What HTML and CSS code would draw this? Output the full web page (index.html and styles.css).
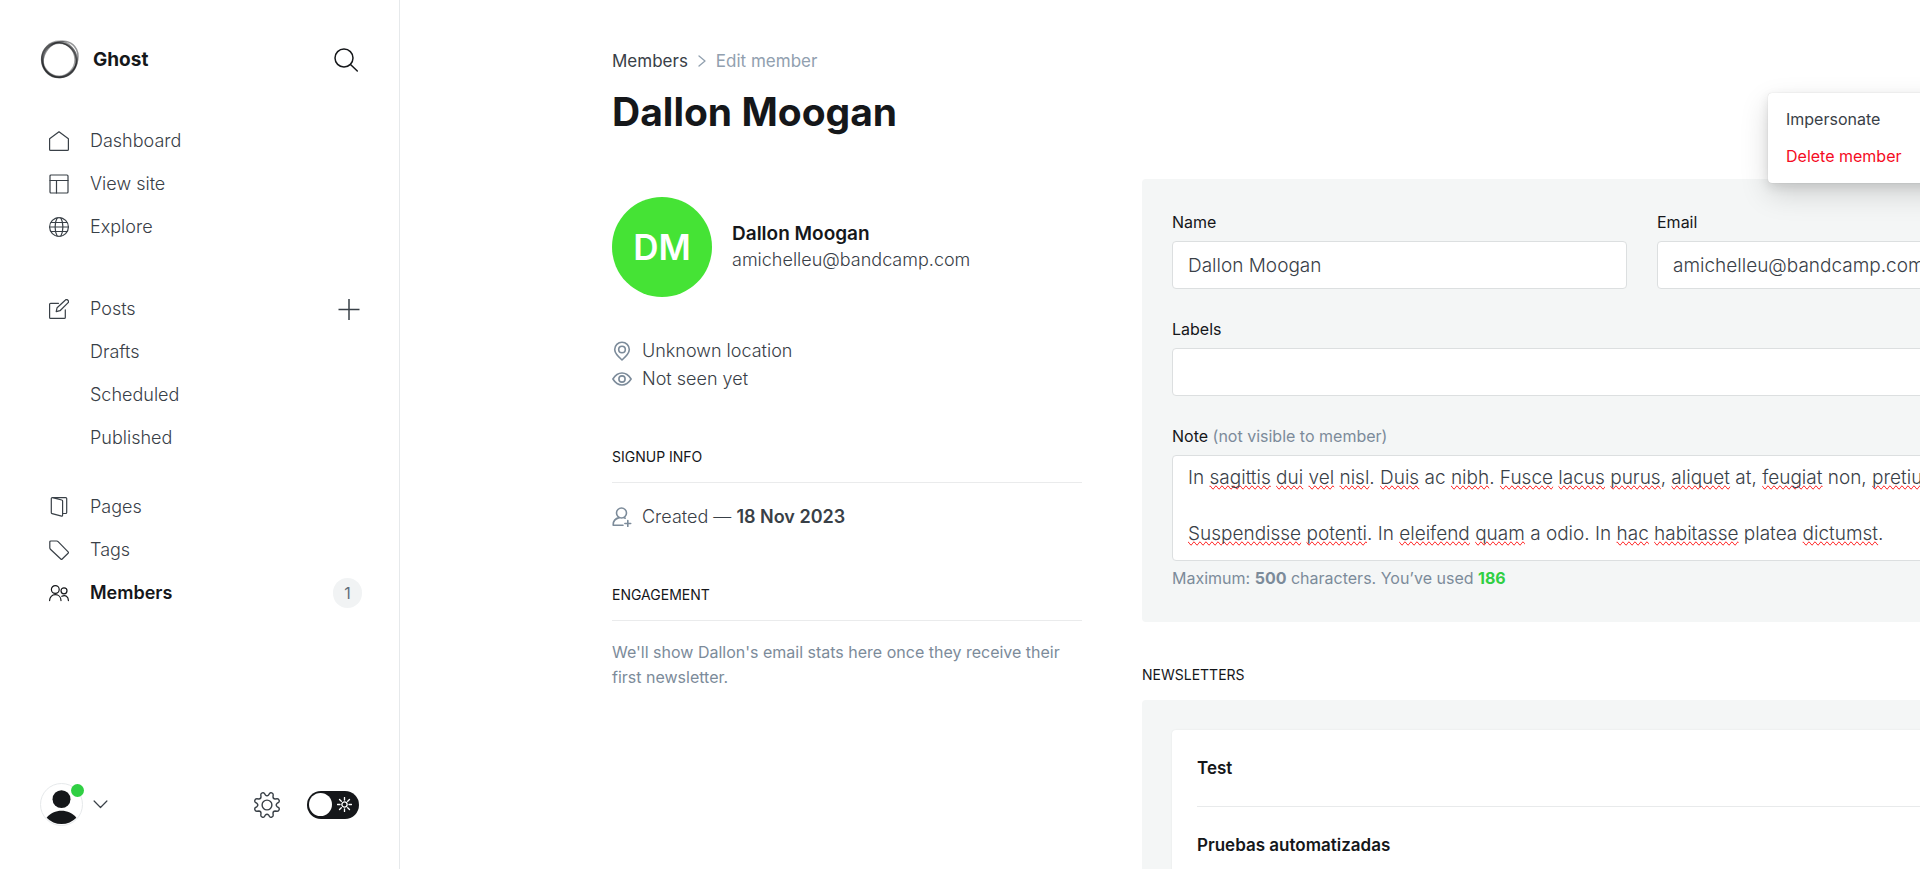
FILE: index.html
```html
<!DOCTYPE html>
<html lang="en">
<head>
<meta charset="utf-8">
<meta name="viewport" content="width=device-width, initial-scale=1">
<title>Dallon Moogan - Members - Ghost</title>
<link rel="stylesheet" href="styles.css">
</head>
<body>
<div class="app">
  <aside class="sidebar">
    <header class="sidebar-header">
      <a class="brand" href="#">
        <svg class="brand-logo" viewBox="0 0 38 38" aria-hidden="true">
          <g fill="none" stroke="#15171a">
            <ellipse cx="18.500" cy="19" rx="16.300" ry="17" stroke-opacity=".4" stroke-width="2.800"/>
            <ellipse cx="19" cy="19.500" rx="17" ry="16.500" stroke-opacity=".45" stroke-width="1.800"/>
            <ellipse cx="20" cy="18.800" rx="18.600" ry="15.800" stroke-opacity=".45" stroke-width="1.500" transform="rotate(-50 20 18.800)"/>
            <ellipse cx="18.500" cy="19.500" rx="17.600" ry="16.200" stroke-opacity=".5" stroke-width="1.300" transform="rotate(50 18.500 19.500)"/>
          </g>
        </svg>
        <span>Ghost</span>
      </a>
      <button class="icon-button" type="button" aria-label="Search">
        <svg class="icon-search" viewBox="0 0 24 24" aria-hidden="true"><circle cx="10" cy="10" r="9"/><path d="M16.500 16.500 23.300 23"/></svg>
      </button>
    </header>

    <nav class="nav" aria-label="Main">
      <ul class="nav-group">
        <li class="nav-row"><a class="nav-link" href="#">
          <svg class="nav-icon" viewBox="0 0 20 20" aria-hidden="true"><path d="M.600 7.800V18.400a1 1 0 0 0 1 1H18.400a1 1 0 0 0 1-1V7.800L10 .800z"/></svg>Dashboard</a></li>
        <li class="nav-row"><a class="nav-link" href="#">
          <svg class="nav-icon" viewBox="0 0 20 20" aria-hidden="true"><rect x="1" y="1" width="18" height="18" rx="1"/><path d="M1 6.500H19M7.500 6.500V19"/></svg>View site</a></li>
        <li class="nav-row"><a class="nav-link" href="#">
          <svg class="nav-icon" viewBox="0 0 20 20" aria-hidden="true"><circle cx="10" cy="10" r="9.400"/><path d="M.600 10H19.400M2.200 5.500H17.800M2.200 14.500H17.800M8.200 .800C5.400 6 5.400 14 8.200 19.200M11.800 .800C14.600 6 14.600 14 11.800 19.200"/></svg>Explore</a></li>
      </ul>
      <ul class="nav-group nav-group-posts">
        <li class="nav-row"><a class="nav-link" href="#">
          <svg class="nav-icon" viewBox="0 0 20 20" aria-hidden="true"><path d="M9.500 4.300H1.600a1 1 0 0 0-1 1V18.400a1 1 0 0 0 1 1H15.300a1 1 0 0 0 1-1V10.800"/><path d="M7.200 12.600l.900-3.900L16.200 1.200a1.900 1.900 0 0 1 2.700 2.700L11 11.700z"/></svg>Posts</a>
          <button class="icon-button" type="button" aria-label="New post"><svg class="icon-plus" viewBox="0 0 22 22" aria-hidden="true"><path d="M.500 11.500H21.500M11 1V22"/></svg></button></li>
        <li class="nav-row"><a class="nav-link nav-child" href="#">Drafts</a></li>
        <li class="nav-row"><a class="nav-link nav-child" href="#">Scheduled</a></li>
        <li class="nav-row"><a class="nav-link nav-child" href="#">Published</a></li>
      </ul>
      <ul class="nav-group nav-group-content">
        <li class="nav-row"><a class="nav-link" href="#">
          <svg class="nav-icon" viewBox="0 0 20 20" aria-hidden="true"><path d="M2.300 1.500V15.700a1 1 0 0 0 .8 1L12.600 19.100a.800.800 0 0 0 1-.800V4a1 1 0 0 0-.8-1L3.300 .700a.800.800 0 0 0-1 .800zM3.200 .600H16.700a1 1 0 0 1 1 1V15.500a1 1 0 0 1-1 1H13.600"/></svg>Pages</a></li>
        <li class="nav-row"><a class="nav-link" href="#">
          <svg class="nav-icon" viewBox="0 0 20 20" aria-hidden="true"><path d="M.800 2V7.800a2 2 0 0 0 .600 1.400L11.800 19a1 1 0 0 0 1.400 0L19.100 13.200a1 1 0 0 0 0-1.400L9.100 1.600A2 2 0 0 0 7.700 1H1.800a1 1 0 0 0-1 1z"/></svg>Tags</a></li>
        <li class="nav-row"><a class="nav-link nav-active" href="#" aria-current="page">
          <svg class="nav-icon" viewBox="0 0 20 20" aria-hidden="true"><circle cx="6.300" cy="6.500" r="3.900"/><circle cx="15" cy="7.800" r="3"/><path d="M.600 17.600C.600 14 3 11.700 6.300 11.700S12 14 12 17.600M12.800 13.300C16.500 11.300 19.400 13.800 19.400 17.600"/></svg>Members</a>
          <span class="badge">1</span></li>
      </ul>
    </nav>

    <footer class="sidebar-footer">
      <button class="user-menu" type="button" aria-label="Account menu">
        <span class="user-avatar">
          <svg viewBox="0 0 42 42" aria-hidden="true"><circle cx="21" cy="15.500" r="9.200"/><path d="M5.800 34.500C13 25 29 25 36.200 34.500A21 21 0 0 1 5.800 34.500z"/></svg>
          <span class="user-dot"></span>
        </span>
        <svg class="icon-chevron" viewBox="0 0 14 9" aria-hidden="true"><path d="M.600 1 7 7.500 13.400 1"/></svg>
      </button>
      <div class="footer-tools">
        <button class="icon-button" type="button" aria-label="Settings">
          <svg class="icon-gear" viewBox="0 0 26 26" aria-hidden="true"><circle cx="13" cy="13" r="4.900"/><path d="M14.600 3Q13 4.600 11.400 3L10.400 1.400Q9.600 .400 8.200 .900Q6.700 1.400 6.800 2.900L7 4.900Q6.900 6.900 4.900 7L2.900 6.800Q1.400 6.700.900 8.200Q.400 9.600 1.400 10.400L3 11.400Q4.600 13 3 14.600L1.400 15.600Q.400 16.400.900 17.800Q1.400 19.300 2.900 19.200L4.900 19Q6.900 19.100 7 21.100L6.800 23.100Q6.700 24.600 8.200 25.100Q9.600 25.600 10.400 24.600L11.400 23Q13 21.400 14.600 23L15.600 24.600Q16.400 25.600 17.800 25.100Q19.300 24.600 19.200 23.100L19 21.100Q19.100 19.100 21.100 19L23.100 19.200Q24.600 19.300 25.100 17.800Q25.600 16.400 24.600 15.600L23 14.600Q21.400 13 23 11.400L24.600 10.400Q25.600 9.600 25.100 8.200Q24.600 6.700 23.100 6.800L21.100 7Q19.100 6.900 19 4.900L19.200 2.900Q19.300 1.400 17.800 .900Q16.400 .400 15.600 1.400z"/></svg>
        </button>
        <label class="theme-toggle">
          <input type="checkbox" aria-label="Night mode">
          <svg viewBox="0 0 16 16" aria-hidden="true"><circle cx="8" cy="8" r="2.800"/><path d="M8 .500V3.200M8 12.800V15.500M.500 8H3.200M12.800 8H15.500M2.700 2.700 4.600 4.600M11.400 11.400 13.300 13.300M13.300 2.700 11.400 4.600M4.600 11.400 2.700 13.300"/></svg>
        </label>
      </div>
    </footer>
  </aside>

  <main class="main">
    <div class="canvas">
      <header class="page-header">
        <nav class="breadcrumb" aria-label="Breadcrumb">
          <a href="#">Members</a>
          <svg class="icon-crumb" viewBox="0 0 8 12" aria-hidden="true"><path d="M1 1 7 6 1 11"/></svg>
          <span>Edit member</span>
        </nav>
        <h1>Dallon Moogan</h1>
        <ul class="menu">
          <li><button type="button">Impersonate</button></li>
          <li><button class="danger" type="button">Delete member</button></li>
        </ul>
      </header>

      <div class="columns">
        <section class="profile">
          <div class="identity">
            <div class="identity-avatar">DM</div>
            <div>
              <h2>Dallon Moogan</h2>
              <p>amichelleu@bandcamp.com</p>
            </div>
          </div>
          <ul class="facts">
            <li><svg class="fact-icon" viewBox="0 0 20 20" aria-hidden="true"><path d="M10 19C6 15.500 2.700 12.500 2.700 8.500a7.300 7.300 0 0 1 14.600 0C17.300 12.500 14 15.500 10 19z"/><circle cx="10" cy="8.500" r="3.300"/></svg>Unknown location</li>
            <li><svg class="fact-icon" viewBox="0 0 20 20" aria-hidden="true"><path d="M.900 10C3.500 5.800 6.500 4 10 4s6.500 1.800 9.100 6C16.500 14.200 13.500 16 10 16S3.500 14.200.900 10z"/><circle cx="10" cy="10" r="3.100"/></svg>Not seen yet</li>
          </ul>
          <section class="block">
            <h3>SIGNUP INFO</h3>
            <p class="created"><svg class="fact-icon" viewBox="0 0 20 20" aria-hidden="true"><circle cx="9.500" cy="6" r="5"/><path d="M11 18.300H1.200C1 14.500 3.500 11.500 7.200 10.600M12 10.600 13.200 11.200M15.800 13.600V19.400M12.900 16.500H18.700"/></svg><span>Created — <strong>18 Nov 2023</strong></span></p>
          </section>
          <section class="block">
            <h3>ENGAGEMENT</h3>
            <p class="hint">We'll show Dallon's email stats here once they receive their first newsletter.</p>
          </section>
        </section>

        <div class="details">
          <form class="card">
            <div class="field-pair">
              <div class="field">
                <label for="name">Name</label>
                <input id="name" type="text" value="Dallon Moogan">
              </div>
              <div class="field">
                <label for="email">Email</label>
                <input id="email" type="email" value="amichelleu@bandcamp.com">
              </div>
            </div>
            <div class="field">
              <label for="labels">Labels</label>
              <input id="labels" type="text">
            </div>
            <div class="field">
              <label for="note">Note <span>(not visible to member)</span></label>
              <div class="note-box">
                <div class="note-marks" aria-hidden="true">In <u>sagittis</u> <u>dui</u> <u>vel</u> <u>nisl</u>. <u>Duis</u> ac <u>nibh</u>. <u>Fusce</u> <u>lacus</u> <u>purus</u>, <u>aliquet</u> at, <u>feugiat</u> non, <u>pretium</u>

<u>Suspendisse</u> <u>potenti</u>. In <u>eleifend</u> <u>quam</u> a odio. In <u>hac</u> <u>habitasse</u> platea <u>dictumst</u>.</div>
                <textarea id="note" spellcheck="false">In sagittis dui vel nisl. Duis ac nibh. Fusce lacus purus, aliquet at, feugiat non, pretium

Suspendisse potenti. In eleifend quam a odio. In hac habitasse platea dictumst.</textarea>
              </div>
              <p class="counter">Maximum: <b>500</b> characters. You’ve used <b class="count">186</b></p>
            </div>
          </form>

          <h3 class="newsletters-title">NEWSLETTERS</h3>
          <section class="card">
            <ul class="newsletters">
              <li>Test</li>
              <li>Pruebas automatizadas</li>
            </ul>
          </section>
        </div>
      </div>
    </div>
  </main>
</div>
</body>
</html>
```

FILE: styles.css
```css
:root {
  --black: #15171a;
  --dark: #394047;
  --mid: #7c8b9a;
  --line: #e6e9eb;
  --panel: #f4f6f6;
  --green: #30cf43;
  --red: #f50b23;
}

*, *::before, *::after { box-sizing: border-box; }

body {
  margin: 0;
  background: #fff;
  color: var(--dark);
  font: 300 18px/28px Inter, "Liberation Sans", sans-serif;
  overflow: hidden;
}

h1, h2, h3, p, ul { margin: 0; padding: 0; }
ul { list-style: none; }
a { color: inherit; text-decoration: none; }
svg { display: block; fill: none; stroke: currentColor; stroke-linecap: round; stroke-linejoin: round; }
button { padding: 0; border: 0; background: none; color: inherit; font: inherit; cursor: pointer; }

.app { display: flex; height: 100vh; }

/* Sidebar */
.sidebar {
  display: flex;
  flex: 0 0 400px;
  flex-direction: column;
  border-right: 1px solid var(--line);
}
.sidebar-header {
  display: flex;
  align-items: center;
  justify-content: space-between;
  padding: 40px 41px 0 40px;
}
.brand {
  display: flex;
  align-items: center;
  gap: 14px;
  color: var(--black);
  font-size: 19px;
  font-weight: 700;
}
.brand-logo { width: 39px; height: 39px; overflow: visible; }
.icon-button { display: block; }
.icon-search { width: 24px; height: 24px; color: var(--black); stroke-width: 1.5; }
.icon-plus { width: 22px; height: 22px; stroke-width: 1.5; stroke-linecap: butt; }

.nav { padding: 41px 37px 0 49px; }
.nav-group-posts { margin-top: 40px; }
.nav-group-content { margin-top: 27px; }
.nav-row {
  display: flex;
  align-items: center;
  justify-content: space-between;
  height: 42px;
}
.nav-row + .nav-row { margin-top: 1px; }
.nav-row .icon-button { margin-right: 2px; }
.nav-link { display: flex; flex: 1; align-items: center; gap: 21px; }
.nav-icon { width: 20px; height: 20px; stroke-width: 1.2; }
.nav-child { padding-left: 41px; }
.nav-active { color: var(--black); font-weight: 600; }
.badge {
  min-width: 29px;
  padding: 0 8px;
  border-radius: 15px;
  background: #f1f3f4;
  color: #626d79;
  font-size: 16px;
  font-weight: 400;
  line-height: 30px;
  text-align: center;
}

.sidebar-footer {
  display: flex;
  align-items: center;
  justify-content: space-between;
  margin-top: auto;
  padding: 0 40px 43px;
}
.user-menu { display: flex; align-items: center; gap: 10px; }
.user-avatar {
  position: relative;
  width: 43px;
  height: 43px;
  border: 1px solid var(--line);
  border-radius: 50%;
}
.user-avatar svg { fill: var(--black); stroke: none; }
.user-dot {
  position: absolute;
  top: 0;
  right: -2px;
  width: 13px;
  height: 13px;
  border-radius: 50%;
  background: var(--green);
}
.icon-chevron { width: 15px; height: 9px; stroke-width: 1.2; }
.footer-tools { display: flex; align-items: center; gap: 27px; }
.icon-gear { width: 26px; height: 26px; stroke-width: 1.4; }
.theme-toggle {
  display: flex;
  align-items: center;
  gap: 5px;
  width: 52px;
  height: 28px;
  padding: 0 2px;
  border-radius: 14px;
  background: var(--black);
  color: #fff;
}
.theme-toggle input {
  appearance: none;
  width: 23px;
  height: 23px;
  margin: 0;
  border-radius: 50%;
  background: #fff;
}
.theme-toggle svg { width: 15px; height: 15px; stroke-width: 1.4; }

/* Page */
.main { flex: 1; min-width: 0; overflow: hidden; }
.canvas { min-width: 1742px; padding: 47px 0 0 212px; }
.page-header { position: relative; }
.breadcrumb {
  display: flex;
  align-items: center;
  gap: 10px;
  color: #91a0af;
  font-size: 17px;
  font-weight: 400;
}
.breadcrumb a { color: var(--dark); }
.icon-crumb { width: 8px; height: 12px; stroke-width: 1.3; }
h1 { color: var(--black); font-size: 39px; font-weight: 700; line-height: 48px; padding-top: 13px; }

.menu {
  position: absolute;
  top: 46px;
  right: 0;
  z-index: 2;
  width: 374px;
  padding: 8px 0;
  border-radius: 4px;
  background: #fff;
  box-shadow: 0 0 1px rgba(0, 0, 0, .2), 0 4px 11px rgba(0, 0, 0, .1), 0 11px 29px rgba(0, 0, 0, .15);
}
.menu button { display: block; width: 100%; padding: 4px 18px 5px; font-size: 16px; font-weight: 400; text-align: left; }
.menu .danger { color: var(--red); }

.columns { display: grid; grid-template-columns: 470fr 1000fr; gap: 60px; padding-top: 43px; }
.profile { padding-top: 18px; }
.identity { display: flex; align-items: center; gap: 20px; line-height: 26px; }
.identity-avatar {
  width: 100px;
  height: 100px;
  border-radius: 50%;
  background: #45e335;
  color: #fff;
  font-size: 35px;
  font-weight: 600;
  line-height: 100px;
  text-align: center;
}
h2 { color: var(--black); font-size: 19px; font-weight: 600; line-height: 26px; }
.facts { padding-top: 40px; }
.facts li, .created { display: flex; align-items: center; gap: 10px; }
.fact-icon { width: 20px; height: 20px; color: var(--mid); stroke-width: 1.6; }
h3 { color: var(--black); font-size: 14px; font-weight: 400; line-height: 20px; }
.block { padding-top: 54px; }
.block h3 { padding-bottom: 15px; border-bottom: 1px solid #eaebec; }
.created { padding-top: 20px; }
.created strong { font-weight: 600; }
.hint { padding-top: 19px; color: var(--mid); font-size: 16px; font-weight: 400; line-height: 25px; }

.card { display: grid; gap: 27px; padding: 30px; border-radius: 4px; background: var(--panel); }
.field-pair { display: grid; grid-template-columns: 1fr 1fr; gap: 30px; }
.field label { display: block; padding-bottom: 6px; color: var(--black); font-size: 16px; font-weight: 400; line-height: 26px; }
.field label span { color: var(--mid); }
.field input, .note-box {
  display: block;
  width: 100%;
  height: 48px;
  border: 1px solid #dcdfe0;
  border-radius: 4px;
  background: #fff;
  color: var(--dark);
  font: 300 19px/28px Inter, "Liberation Sans", sans-serif;
}
.field input { padding: 0 15px; }
.note-box { position: relative; height: 106px; overflow: hidden; }
.note-box textarea, .note-marks {
  display: block;
  width: 100%;
  height: 100%;
  margin: 0;
  padding: 8px 15px;
  border: 0;
  background: transparent;
  color: inherit;
  font: inherit;
  resize: none;
  white-space: pre-wrap;
}
.note-box textarea { position: relative; }
.note-marks { position: absolute; inset: 0; color: transparent; }
.note-marks u { text-decoration: spelling-error; }
.counter { padding-top: 3px; color: var(--mid); font-size: 16px; font-weight: 400; }
.counter b { font-weight: 700; }
.counter .count { color: var(--green); }

.newsletters-title { padding: 43px 0 15px; }
.newsletters { padding: 0 25px; border-radius: 4px; background: #fff; box-shadow: 0 0 2px rgba(0, 0, 0, .08); }
.newsletters li { padding: 24px 0; color: var(--black); font-size: 17px; font-weight: 600; }
.newsletters li + li { border-top: 1px solid #e8eaeb; }
```
